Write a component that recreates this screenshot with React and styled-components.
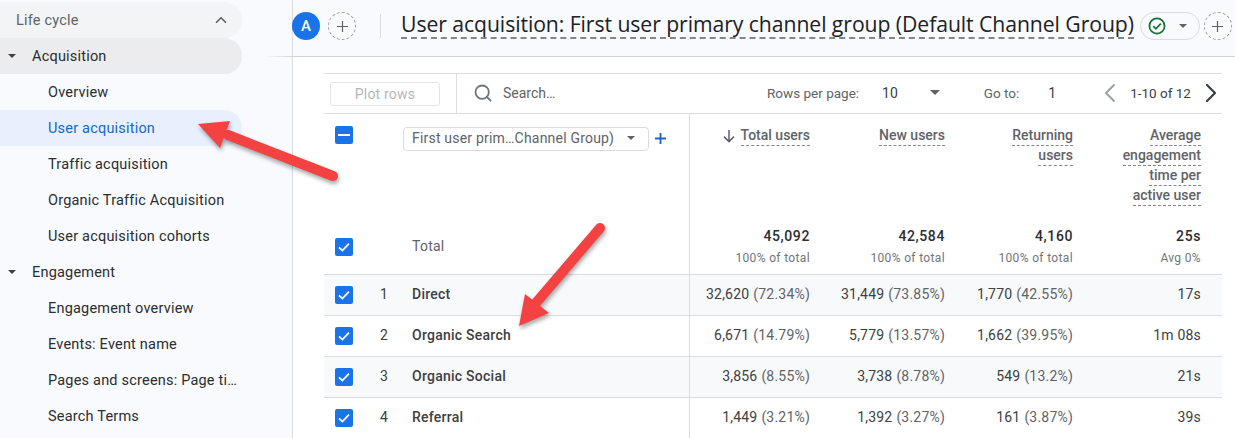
import React from "react";
import styled, { createGlobalStyle } from "styled-components";
import { ChevronLeft, ChevronRight, ChevronUp, Search } from "lucide-react";

const GlobalStyle = createGlobalStyle`
  html, body { margin: 0; padding: 0; background: #fff; }
  body { font-family: Roboto, "Liberation Sans", sans-serif; color: #202124; }
`;

const Page = styled.div`
  position: relative;
  display: flex;
  width: 1235px;
  height: 438px;
  overflow: hidden;
`;

const Sidebar = styled.nav`
  flex: 0 0 292px;
  padding-top: 2px;
  background: #f8fafd;
  box-sizing: border-box;
`;

const NavItem = styled.div`
  display: flex;
  align-items: center;
  width: 242px;
  height: 36px;
  box-sizing: border-box;
  padding-left: ${(p) => (p.$top ? "16px" : p.$group ? "8px" : "48px")};
  font-size: 14.5px;
  letter-spacing: 0.2px;
  white-space: nowrap;
  color: ${(p) => (p.$active ? "#1a66c9" : p.$top ? "#5f6368" : "#2b2d30")};
  background: ${(p) => (p.$active ? "#e8f0fe" : p.$open ? "#ececee" : p.$top ? "#f3f4f6" : "transparent")};
  border-radius: ${(p) => (p.$active || p.$open || p.$top ? "0 18px 18px 0" : "0")};
`;

const Caret = styled.span`
  width: 0;
  height: 0;
  flex: none;
  border-left: ${(p) => p.$size || 4}px solid transparent;
  border-right: ${(p) => p.$size || 4}px solid transparent;
  border-top: ${(p) => p.$size || 4}px solid ${(p) => p.$color || "#3c4043"};
`;

const GroupLabel = styled.span`
  margin-left: 16px;
`;

const CollapseIcon = styled.span`
  display: flex;
  margin-left: auto;
  margin-right: 12px;
  color: #5f6368;
`;

const Main = styled.main`
  flex: 1;
  min-width: 0;
  border-left: 1px solid #dadce0;
`;

const Header = styled.header`
  position: relative;
  display: flex;
  align-items: center;
  height: 57px;
  box-sizing: border-box;
  padding-bottom: 4px;
  background: #f8fafd;
  border-bottom: 1px solid #d0d3d7;

  /* line fades out under the sidebar */
  &::before {
    content: "";
    position: absolute;
    left: -28px;
    bottom: -1px;
    width: 28px;
    height: 1px;
    background: linear-gradient(to right, #f8fafd, #d0d3d7);
  }
`;

const Avatar = styled.div`
  display: flex;
  align-items: center;
  justify-content: center;
  flex: none;
  width: 28px;
  height: 28px;
  margin-left: -1px;
  border-radius: 50%;
  background: #1a73e8;
  color: #fff;
  font-size: 15px;
  font-weight: 500;
`;

const AddCircle = styled.div`
  display: flex;
  align-items: center;
  justify-content: center;
  flex: none;
  width: 26px;
  height: 26px;
  margin-left: ${(p) => p.$gap}px;
  border: 1px dashed #9aa0a6;
  border-radius: 50%;
  color: #5f6368;
`;

const HeaderDivider = styled.div`
  flex: none;
  width: 1px;
  height: 24px;
  margin: 0 20px 0 24px;
  background: #dadce0;
`;

const Title = styled.h1`
  margin: 0 0 2px;
  flex: none;
  font-family: "Open Sans", Roboto, sans-serif;
  font-size: 21.2px;
  line-height: 26px;
  font-weight: 400;
  letter-spacing: -0.07px;
  white-space: nowrap;
  color: #202124;
  border-bottom: 2px dashed #80868b;
`;

const StatusChip = styled.div`
  display: flex;
  align-items: center;
  gap: 13px;
  flex: none;
  width: 60px;
  height: 28px;
  margin-left: 6px;
  padding-left: 7px;
  box-sizing: border-box;
  border: 1px solid #dadce0;
  border-radius: 14px;
`;

const Content = styled.div`
  padding: 16px 13px 0 31px;
`;

const Toolbar = styled.div`
  display: flex;
  align-items: center;
  height: 41px;
  box-sizing: border-box;
  padding-bottom: 2px;
  border-top: 1px solid #dadce0;
  border-bottom: 1px solid #dadce0;
  font-size: 13.5px;
  color: #5f6368;
`;

const PlotCell = styled.div`
  display: flex;
  align-items: center;
  align-self: stretch;
  flex: none;
  width: 133px;
  margin-bottom: -2px;
  padding-left: 6px;
  box-sizing: border-box;
  border-right: 1px solid #dadce0;
`;

const PlotButton = styled.button`
  width: 110px;
  height: 24px;
  padding: 0;
  border: 1px solid #e3e5e8;
  border-radius: 3px;
  background: #fff;
  color: #b4b7bb;
  font: 400 14px Roboto, sans-serif;
  letter-spacing: 0.2px;
`;

const SearchBox = styled.div`
  display: flex;
  align-items: center;
  gap: 10px;
  flex: none;
  width: 310px;
  padding-left: 16px;
  box-sizing: border-box;
  font-size: 14px;
  color: #5f6368;
`;

const PagerText = styled.span`
  flex: none;
  margin-left: ${(p) => p.$left || 0}px;
  color: ${(p) => (p.$dark ? "#3c4043" : "#5f6368")};
  font-size: ${(p) => p.$size || 13.5}px;
`;

const PagerIcon = styled.span`
  display: flex;
  flex: none;
  margin-left: ${(p) => p.$left || 0}px;
  color: ${(p) => (p.$dim ? "#9aa0a6" : "#3c4043")};
`;

const TableHead = styled.div`
  display: grid;
  grid-template-columns: 366px 120px 135px 128px 128px 21px;
  height: 112px;
`;

const DimHead = styled.div`
  display: flex;
  align-items: flex-start;
  padding: 12px 0 0 11px;
  border-right: 1px solid #dadce0;
  box-sizing: border-box;
`;

const Check = styled.span`
  display: flex;
  align-items: center;
  justify-content: center;
  flex: none;
  width: 18px;
  height: 18px;
  border-radius: 2px;
  background: #1a73e8;
`;

const Dropdown = styled.div`
  display: flex;
  align-items: center;
  justify-content: space-between;
  width: 246px;
  height: 24px;
  margin: 1px 0 0 50px;
  padding: 0 13px 2px 8px;
  box-sizing: border-box;
  border: 1px solid #dadce0;
  border-radius: 4px;
  font-size: 14px;
  letter-spacing: 0.2px;
  color: #5f6368;
  white-space: nowrap;
`;

const DimAdd = styled.span`
  display: flex;
  margin: 6px 0 0 5px;
  color: #1a66c9;
`;

const MetricHead = styled.div`
  display: flex;
  flex-direction: column;
  align-items: flex-end;
  padding-top: 12px;
`;

const MetricLine = styled.div`
  display: flex;
  align-items: center;
  gap: 5px;
  height: 20px;
`;

const MetricLabel = styled.span`
  font-size: 14px;
  line-height: 19px;
  font-weight: 500;
  color: #5f6368;
  white-space: nowrap;
  border-bottom: 1px dashed #80868b;
`;

const Row = styled.div`
  display: grid;
  grid-template-columns: 366px 120px 135px 128px 128px 21px;
  height: ${(p) => (p.$total ? 49 : 41)}px;
  box-sizing: border-box;
  border-bottom: 1px solid #dadce0;
  background: ${(p) => (p.$shade ? "#f8f9fa" : "#fff")};
  font-size: 14px;
`;

const DimCell = styled.div`
  display: flex;
  align-items: center;
  padding-left: 11px;
  box-sizing: border-box;
  border-right: 1px solid #dadce0;
  padding-bottom: ${(p) => (p.$total ? "6px" : "0")};
`;

const RowIndex = styled.span`
  flex: none;
  width: 59px;
  padding: 0 0 2px 3px;
  box-sizing: border-box;
  text-align: center;
  color: #3c4043;
`;

const RowName = styled.span`
  padding-bottom: 2px;
  font-weight: ${(p) => (p.$muted ? 400 : 500)};
  color: ${(p) => (p.$muted ? "#5f6368" : "#3c4043")};
  letter-spacing: 0.25px;
`;

const ValueCell = styled.div`
  display: flex;
  align-items: center;
  justify-content: flex-end;
  padding-bottom: 2px;
  white-space: nowrap;
  letter-spacing: 0.2px;
  color: #3c4043;
`;

const Percent = styled.span`
  margin-left: 4px;
  color: #5f6368;
`;

const TotalCell = styled.div`
  display: flex;
  flex-direction: column;
  align-items: flex-end;
  padding-top: 2px;
`;

const TotalValue = styled.span`
  font-size: 14px;
  line-height: 16px;
  font-weight: 500;
  letter-spacing: 0.6px;
  color: #2b2d30;
`;

const TotalSub = styled.span`
  margin-top: 6px;
  font-size: 12px;
  line-height: 16px;
  letter-spacing: 0.35px;
  color: #70757a;
`;

const Arrows = styled.svg`
  position: absolute;
  inset: 0;
  width: 1235px;
  height: 438px;
  pointer-events: none;
  filter: drop-shadow(1px 3px 2px rgba(0, 0, 0, 0.35));
`;

const lifeCycle = [
  { label: "Acquisition", group: true, open: true },
  { label: "Overview" },
  { label: "User acquisition", active: true },
  { label: "Traffic acquisition" },
  { label: "Organic Traffic Acquisition" },
  { label: "User acquisition cohorts" },
  { label: "Engagement", group: true },
  { label: "Engagement overview" },
  { label: "Events: Event name" },
  { label: "Pages and screens: Page ti…" },
  { label: "Search Terms" },
];

const metrics = [
  { lines: ["Total users"], sorted: true },
  { lines: ["New users"] },
  { lines: ["Returning", "users"] },
  { lines: ["Average", "engagement", "time per", "active user"] },
];

const totals = [
  ["45,092", "100% of total"],
  ["42,584", "100% of total"],
  ["4,160", "100% of total"],
  ["25s", "Avg 0%"],
];

const rows = [
  { name: "Direct", values: [["32,620", "(72.34%)"], ["31,449", "(73.85%)"], ["1,770", "(42.55%)"]], time: "17s" },
  { name: "Organic Search", values: [["6,671", "(14.79%)"], ["5,779", "(13.57%)"], ["1,662", "(39.95%)"]], time: "1m 08s" },
  { name: "Organic Social", values: [["3,856", "(8.55%)"], ["3,738", "(8.78%)"], ["549", "(13.2%)"]], time: "21s" },
  { name: "Referral", values: [["1,449", "(3.21%)"], ["1,392", "(3.27%)"], ["161", "(3.87%)"]], time: "39s" },
];

const CheckMark = () => (
  <svg width="14" height="14" viewBox="0 0 14 14" fill="none">
    <path d="M2 7.4 5.4 10.6 12 3.6" stroke="#fff" strokeWidth="1.8" />
  </svg>
);

const Plus = ({ size = 14, width = 1.5 }) => (
  <svg width={size} height={size} viewBox="0 0 14 14" fill="none">
    <path d="M7 1v12M1 7h12" stroke="currentColor" strokeWidth={width} />
  </svg>
);

export default function App() {
  return (
    <Page>
      <GlobalStyle />
      <Sidebar>
        <NavItem $top>
          Life cycle
          <CollapseIcon>
            <ChevronUp size={18} strokeWidth={2.2} />
          </CollapseIcon>
        </NavItem>
        {lifeCycle.map((item) =>
          item.group ? (
            <NavItem key={item.label} $group $open={item.open}>
              <Caret />
              <GroupLabel>{item.label}</GroupLabel>
            </NavItem>
          ) : (
            <NavItem key={item.label} $active={item.active}>
              {item.label}
            </NavItem>
          )
        )}
      </Sidebar>

      <Main>
        <Header>
          <Avatar>A</Avatar>
          <AddCircle $gap={8}>
            <Plus size={13} width={1.3} />
          </AddCircle>
          <HeaderDivider />
          <Title>User acquisition: First user primary channel group (Default Channel Group)</Title>
          <StatusChip>
            <svg width="18" height="18" viewBox="0 0 18 18" fill="none">
              <circle cx="9" cy="9" r="7.6" stroke="#137333" strokeWidth="1.7" />
              <path d="M5.3 9.2 7.9 11.8 12.8 6.6" stroke="#137333" strokeWidth="1.7" />
            </svg>
            <Caret $size={4} $color="#5f6368" />
          </StatusChip>
          <AddCircle $gap={4}>
            <Plus size={13} width={1.3} />
          </AddCircle>
        </Header>

        <Content>
          <Toolbar>
            <PlotCell>
              <PlotButton>Plot rows</PlotButton>
            </PlotCell>
            <SearchBox>
              <Search size={20} color="#70757a" strokeWidth={2.2} />
              Search…
            </SearchBox>
            <PagerText>Rows per page:</PagerText>
            <PagerText $dark $size={14} $left={23}>10</PagerText>
            <PagerIcon $left={32}>
              <Caret $size={5} $color="#5f6368" />
            </PagerIcon>
            <PagerText $left={44}>Go to:</PagerText>
            <PagerText $dark $size={14} $left={29}>1</PagerText>
            <PagerIcon $dim $left={38}>
              <ChevronLeft size={32} strokeWidth={1.5} />
            </PagerIcon>
            <PagerText $dark $left={4}>1-10 of 12</PagerText>
            <PagerIcon $left={4}>
              <ChevronRight size={32} strokeWidth={1.7} />
            </PagerIcon>
          </Toolbar>

          <TableHead>
            <DimHead>
              <Check>
                <svg width="12" height="12" viewBox="0 0 12 12">
                  <path d="M0 6h12" stroke="#fff" strokeWidth="2" />
                </svg>
              </Check>
              <Dropdown>
                First user prim…Channel Group)
                <Caret $size={4} $color="#5f6368" />
              </Dropdown>
              <DimAdd>
                <Plus size={13} width={2} />
              </DimAdd>
            </DimHead>
            {metrics.map((m) => (
              <MetricHead key={m.lines[0]}>
                {m.lines.map((line) => (
                  <MetricLine key={line}>
                    {m.sorted && (
                      <svg width="14" height="14" viewBox="0 0 14 14" fill="none">
                        <path d="M7 1v11.5M2 7.6l5 5 5-5" stroke="#5f6368" strokeWidth="1.5" />
                      </svg>
                    )}
                    <MetricLabel>{line}</MetricLabel>
                  </MetricLine>
                ))}
              </MetricHead>
            ))}
          </TableHead>

          <Row $total>
            <DimCell $total>
              <Check>
                <CheckMark />
              </Check>
              <RowIndex />
              <RowName $muted>Total</RowName>
            </DimCell>
            {totals.map(([value, sub]) => (
              <TotalCell key={value}>
                <TotalValue>{value}</TotalValue>
                <TotalSub>{sub}</TotalSub>
              </TotalCell>
            ))}
          </Row>

          {rows.map((row, i) => (
            <Row key={row.name} $shade={i % 2 === 0}>
              <DimCell>
                <Check>
                  <CheckMark />
                </Check>
                <RowIndex>{i + 1}</RowIndex>
                <RowName>{row.name}</RowName>
              </DimCell>
              {row.values.map(([count, pct]) => (
                <ValueCell key={count}>
                  {count}
                  <Percent>{pct}</Percent>
                </ValueCell>
              ))}
              <ValueCell>{row.time}</ValueCell>
            </Row>
          ))}
        </Content>
      </Main>

      <Arrows viewBox="0 0 1235 438">
        <path d="M333 176 228 135" stroke="#f44242" strokeWidth="10" strokeLinecap="round" fill="none" />
        <path d="M198 124 230 121 220 148Z" fill="#f44242" />
        <path d="M600 228 535 304" stroke="#f44242" strokeWidth="10" strokeLinecap="round" fill="none" />
        <path d="M519 326 525 294 549 313Z" fill="#f44242" />
      </Arrows>
    </Page>
  );
}
